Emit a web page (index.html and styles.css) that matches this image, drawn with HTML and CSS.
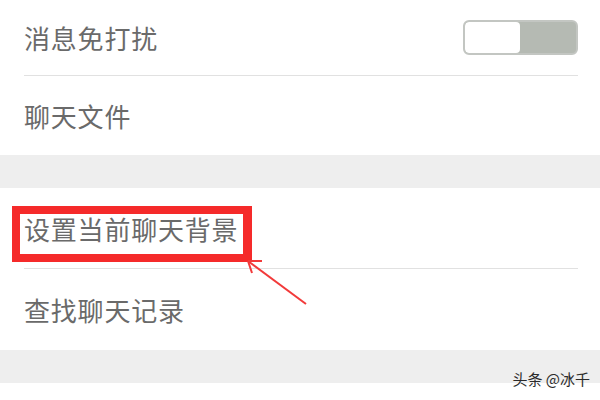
FILE: index.html
```html
<!DOCTYPE html>
<html lang="zh-CN">
<head>
<meta charset="UTF-8">
<meta name="viewport" content="width=device-width, initial-scale=1.0">
<title>聊天设置</title>
<link rel="stylesheet" href="styles.css">
</head>
<body>
<div class="page">
  <div class="group">
    <div class="cell cell-first line">
      <span class="label">消息免打扰</span>
      <div class="switch">
        <div class="knob"></div>
      </div>
    </div>
    <div class="cell cell-second">
      <span class="label">聊天文件</span>
    </div>
  </div>

  <div class="gap"></div>

  <div class="group">
    <div class="cell cell-third line">
      <span class="label">设置当前聊天背景</span>
    </div>
    <div class="cell cell-fourth">
      <span class="label">查找聊天记录</span>
    </div>
  </div>

  <div class="gap"></div>

  <!-- 标注：红框 + 箭头 -->
  <div class="mark-box"></div>
  <svg class="mark-arrow" width="80" height="60" viewBox="0 0 80 60">
    <path d="M2 2 L60 45" stroke="#f23a3a" stroke-width="2" fill="none"/>
    <path d="M2 2 L16 2 M2 2 L6 14" stroke="#f23a3a" stroke-width="2" fill="none"/>
  </svg>

  <div class="watermark">头条 @冰千</div>
</div>
</body>
</html>
```

FILE: styles.css
```css
body {
  margin: 0;
  background-color: #ffffff;
  font-family: "Noto Sans CJK SC", "Noto Sans", sans-serif;
}

.page {
  position: relative;
  width: 600px;
  height: 400px;
  overflow: hidden;
}

.group {
  background-color: #ffffff;
}

.cell {
  display: flex;
  align-items: center;
  justify-content: space-between;
  margin: 0 22px 0 24px;
}

.line {
  border-bottom: 1px solid #e1e1e1;
}

.cell-first {
  height: 75px;
}

.cell-second {
  height: 79px;
}

.cell-third {
  height: 80px;
}

.cell-fourth {
  height: 81px;
}

.label {
  font-size: 26px;
  color: #6a6a6a;
  letter-spacing: 0.8px;
}

.gap {
  height: 33px;
  background-color: #eeeeee;
}

.switch {
  display: flex;
  width: 111px;
  height: 31px;
  border: 2px solid #c3c6c2;
  border-radius: 6px;
  background-color: #b5bab3;
  overflow: hidden;
}

.knob {
  width: 55px;
  height: 100%;
  background-color: #ffffff;
  border-radius: 4px;
}

.mark-box {
  position: absolute;
  left: 12px;
  top: 206px;
  width: 223px;
  height: 40px;
  border: 8px solid #f52a2a;
  border-right-width: 9px;
}

.mark-arrow {
  position: absolute;
  left: 246px;
  top: 259px;
}

.watermark {
  position: absolute;
  right: 10px;
  top: 368px;
  font-size: 15px;
  color: #2b2b2b;
}
```
